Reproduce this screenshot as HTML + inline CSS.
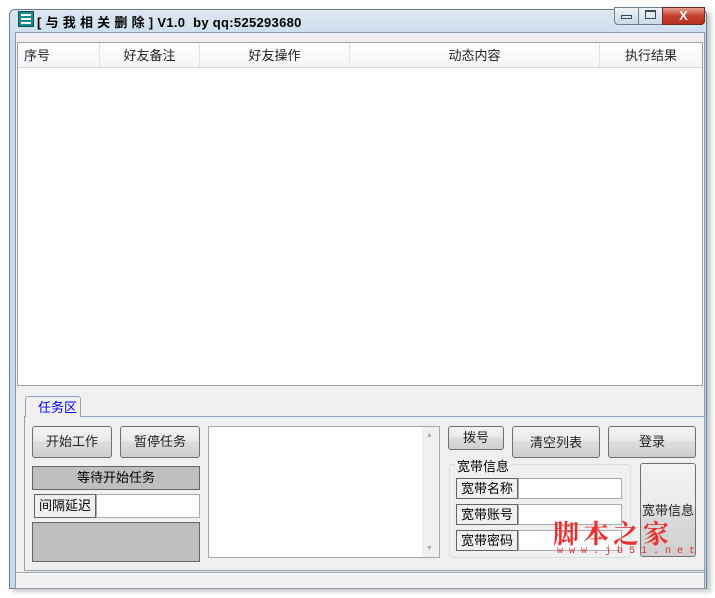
<!DOCTYPE html>
<html><head><meta charset="utf-8"><style>
*{margin:0;padding:0;box-sizing:border-box}
body{width:715px;height:598px;background:#fff;position:relative;overflow:hidden;font-family:"Liberation Sans","Noto Sans CJK SC",sans-serif;font-size:12px;color:#000}
.a{position:absolute}
.btn{position:absolute;border:1px solid #707070;border-radius:3px;background:linear-gradient(#f2f2f2 0%,#ebebeb 45%,#dddddd 50%,#cfcfcf 100%);text-align:center;color:#222;font-size:13px}
.lbl{position:absolute;border:1px solid #646464;background:#f0f0f0;text-align:center;font-size:13px;line-height:19px}
.inp{position:absolute;border:1px solid #a5acb5;background:#fff}
.hd{position:absolute;top:0;height:24px;line-height:25px;border-right:1px solid #e3e3e3;color:#222;font-size:13px;text-align:center}
</style></head><body>
<div class="a" style="left:13px;top:12px;width:698px;height:580px;background:#888;opacity:.45;filter:blur(2px)"></div>
<div class="a" style="left:9px;top:9px;width:698px;height:580px;background:linear-gradient(#dde8f2,#cadcec 30px,#c9dcec);border:1px solid #6a7d90;border-radius:6px 6px 0 0"></div>
<div class="a" style="left:18px;top:11px;width:16px;height:16px;background:#1b8a8a;border:1px solid #0c5050"></div>
<div class="a" style="left:21px;top:14px;width:10px;height:2px;background:#fff"></div>
<div class="a" style="left:21px;top:18px;width:10px;height:2px;background:#fff"></div>
<div class="a" style="left:21px;top:22px;width:10px;height:2px;background:#fff"></div>
<div class="a" style="left:37px;top:12px;font-size:13px;font-weight:bold;letter-spacing:.3px;color:#000">[ 与 我 相 关 删 除 ] V1.0&nbsp; by qq:525293680</div>
<div class="a" style="left:614px;top:7px;width:25px;height:18px;border:1px solid #6d7e90;border-radius:0 0 0 4px;background:linear-gradient(#eef3f8,#cbd9e6)"></div>
<div class="a" style="left:621px;top:15px;width:11px;height:4px;border:1px solid #3a4a5a"></div>
<div class="a" style="left:638px;top:7px;width:25px;height:18px;border:1px solid #6d7e90;background:linear-gradient(#eef3f8,#cbd9e6)"></div>
<div class="a" style="left:645px;top:10px;width:11px;height:9px;border:1px solid #3a4a5a;border-top-width:2px"></div>
<div class="a" style="left:662px;top:7px;width:43px;height:18px;border:1px solid #6b2a22;border-radius:0 0 4px 0;background:linear-gradient(#e8a090,#c7402e 50%,#b83020);color:#fff;font-weight:bold;text-align:center;font-size:13px;line-height:16px">X</div>
<div class="a" style="left:15px;top:32px;width:690px;height:557px;background:#f0f0f0;border:1px solid #8a9aab"></div>
<div class="a" style="left:17px;top:42px;width:686px;height:344px;background:#fff;border:1px solid #9aa3ad">
 <div class="a" style="left:0;top:0;width:684px;height:25px;background:linear-gradient(#fff,#f3f4f6);border-bottom:1px solid #d5d5d5">
  <div class="hd" style="left:0;width:82px;text-align:left;padding-left:6px">序号</div>
  <div class="hd" style="left:82px;width:100px">好友备注</div>
  <div class="hd" style="left:182px;width:150px">好友操作</div>
  <div class="hd" style="left:332px;width:250px">动态内容</div>
  <div class="hd" style="left:582px;width:102px;border:none">执行结果</div>
 </div>
</div>
<div class="a" style="left:24px;top:416px;width:681px;height:155px;border:1px solid #8fa3b6"></div>
<div class="a" style="left:25px;top:396px;width:56px;height:21px;border:1px solid #8fa3b6;border-bottom:none;border-radius:3px 3px 0 0;background:#f0f0f0;color:#0000ff;font-size:13px;line-height:22px;padding-left:12px">任务区</div>
<div class="btn" style="left:32px;top:426px;width:80px;height:32px;line-height:30px">开始工作</div>
<div class="btn" style="left:120px;top:426px;width:80px;height:32px;line-height:30px">暂停任务</div>
<div class="a" style="left:32px;top:466px;width:168px;height:24px;background:#bfbfbf;border:1px solid #666;text-align:center;line-height:22px;font-size:13px">等待开始任务</div>
<div class="lbl" style="left:34px;top:494px;width:62px;height:24px;line-height:22px">间隔延迟</div>
<div class="inp" style="left:96px;top:494px;width:104px;height:24px"></div>
<div class="a" style="left:32px;top:522px;width:168px;height:40px;background:#bfbfbf;border:1px solid #666"></div>
<div class="a" style="left:208px;top:426px;width:232px;height:132px;background:#fff;border:1px solid #a0aab4"></div>
<div class="a" style="left:422px;top:427px;width:17px;height:130px;background:#f0f0f0"></div>
<div class="a" style="left:426px;top:432px;color:#aaa;font-size:7px">▲</div>
<div class="a" style="left:426px;top:545px;color:#aaa;font-size:7px">▼</div>
<div class="btn" style="left:448px;top:426px;width:56px;height:24px;line-height:22px">拨号</div>
<div class="btn" style="left:512px;top:426px;width:88px;height:32px;line-height:32px">清空列表</div>
<div class="btn" style="left:608px;top:426px;width:88px;height:32px;line-height:30px">登录</div>
<div class="a" style="left:449px;top:464px;width:182px;height:94px;border:1px solid #d5dfe5;border-radius:3px"></div>
<div class="a" style="left:455px;top:456px;background:#f0f0f0;padding:0 2px;font-size:13px">宽带信息</div>
<div class="lbl" style="left:456px;top:478px;width:62px;height:21px">宽带名称</div>
<div class="inp" style="left:518px;top:478px;width:104px;height:21px"></div>
<div class="lbl" style="left:456px;top:504px;width:62px;height:21px">宽带账号</div>
<div class="inp" style="left:518px;top:504px;width:104px;height:21px"></div>
<div class="lbl" style="left:456px;top:530px;width:62px;height:21px">宽带密码</div>
<div class="inp" style="left:518px;top:530px;width:104px;height:21px"></div>
<div class="btn" style="left:640px;top:463px;width:56px;height:94px;line-height:94px;font-size:13px">宽带信息</div>
<div class="a" style="left:553px;top:514px;color:#e83030;font-size:26px;font-weight:bold;letter-spacing:4px;font-family:'Noto Serif CJK SC',serif">脚本之家</div>
<div class="a" style="left:557px;top:546px;color:#e03030;font-size:10px;letter-spacing:6px;font-family:'Liberation Mono',monospace">www.jb51.net</div>
<div class="a" style="left:16px;top:572px;width:688px;height:1px;background:#a0a0a0"></div>
<div class="a" style="left:16px;top:573px;width:688px;height:1px;background:#fff"></div>
</body></html>
